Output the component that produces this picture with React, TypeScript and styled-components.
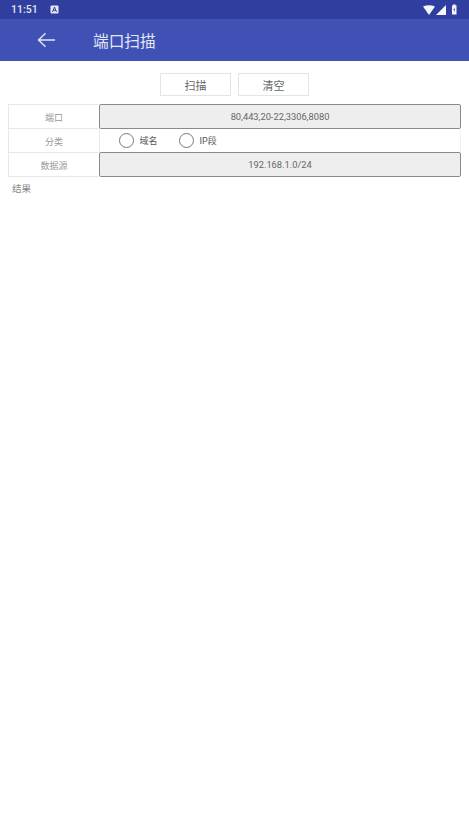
import styled, { createGlobalStyle } from "styled-components";

const GlobalStyle = createGlobalStyle`
  html, body {
    margin: 0;
    padding: 0;
    background: white;
  }
  body {
    font-family: "Roboto", "Noto Sans CJK SC", sans-serif;
  }
`;

const Screen = styled.div`
  width: 469px;
  height: 835px;
  background: white;
  overflow: hidden;
`;

const StatusBar = styled.div`
  height: 19px;
  background: #303f9f;
  color: #e4e7f4;
  display: flex;
  align-items: center;
  padding: 0 10px 0 11px;
  gap: 12px;
  font-size: 10.5px;
  font-weight: 500;
`;

const StatusRight = styled.div`
  margin-left: auto;
  display: flex;
  align-items: center;
  gap: 1px;
`;

const AppBar = styled.div`
  height: 42px;
  background: #3f51b5;
  color: #e4e7f4;
  display: flex;
  align-items: center;
  padding-left: 37px;
  gap: 38px;
  font-size: 15.7px;
`;

const Toolbar = styled.div`
  display: flex;
  justify-content: center;
  gap: 7px;
  padding-top: 12px;
  margin-bottom: 8px;
`;

const ActionButton = styled.button`
  width: 71px;
  height: 23px;
  padding: 0;
  background: white;
  border: 1px solid #e4e4e4;
  color: #666;
  font-size: 11px;
  font-family: inherit;
`;

const Form = styled.div`
  margin: 0 8px;
`;

const Row = styled.div`
  display: flex;
  height: 24px;
`;

const Label = styled.div`
  width: 90px;
  padding-top: 1px;
  border: 1px solid #e8e8e8;
  border-right: 0;
  margin-bottom: -1px;
  display: flex;
  align-items: center;
  justify-content: center;
  color: #999;
  font-size: 9px;
`;

const Field = styled.div`
  flex: 1;
  height: 25px;
  box-sizing: border-box;
  background: #eeeeee;
  border: 1px solid #8a8a8a;
  border-radius: 2px;
  display: flex;
  align-items: center;
  justify-content: center;
  color: #666;
  font-size: 9.3px;
`;

const Options = styled.div`
  flex: 1;
  display: flex;
  align-items: center;
  padding: 1px 0 0 18.5px;
  gap: 21px;
  border-left: 1px solid #e8e8e8;
  border-right: 1px solid #f0f0f0;
`;

const Option = styled.label`
  display: flex;
  align-items: center;
  gap: 6px;
  color: #555;
  font-size: 9px;
`;

const Radio = styled.span`
  flex: none;
  box-sizing: border-box;
  width: 15px;
  height: 15px;
  border: 1.4px solid #777;
  border-radius: 50%;
`;

const Result = styled.div`
  margin: 5px 0 0 12px;
  color: #888;
  font-size: 9.5px;
`;

export default function App() {
  return (
    <Screen>
      <GlobalStyle />
      <StatusBar>
        <span>11:51</span>
        <svg width="9" height="9" viewBox="0 0 9 9">
          <rect x="0.5" y="0.5" width="8" height="8" rx="1" fill="#e4e7f4" />
          <path d="M2.5 7 L4.5 2 L6.5 7 M3.3 5.3 H5.7" fill="none" stroke="#303f9f" strokeWidth="1" />
        </svg>
        <StatusRight>
          <svg width="13" height="10" viewBox="0 0 13 10">
            <path d="M1 1.5 Q7 -1 13 1.5 L7 10 Z" fill="#f5f6fb" />
          </svg>
          <svg width="10" height="10" viewBox="0 0 10 10">
            <path d="M10 0 V10 H0 Z" fill="#f5f6fb" />
          </svg>
          <svg width="12" height="11" viewBox="0 0 12 11">
            <path d="M5 1.5 H6 V0.5 H8.5 V1.5 H9.5 V10.5 H5 Z" fill="#f5f6fb" />
            <path d="M7.6 3 L6.3 6 H7.2 L6.8 8.5 L8.2 5.2 H7.3 Z" fill="#303f9f" />
          </svg>
        </StatusRight>
      </StatusBar>
      <AppBar>
        <svg width="18" height="16" viewBox="0 0 18 16">
          <path d="M18 8 H2 M8.5 1.2 L1.5 8 L8.5 14.8" fill="none" stroke="#e4e7f4" strokeWidth="1.4" />
        </svg>
        <span>端口扫描</span>
      </AppBar>
      <Toolbar>
        <ActionButton>扫描</ActionButton>
        <ActionButton>清空</ActionButton>
      </Toolbar>
      <Form>
        <Row>
          <Label>端口</Label>
          <Field>80,443,20-22,3306,8080</Field>
        </Row>
        <Row>
          <Label>分类</Label>
          <Options>
            <Option>
              <Radio />
              域名
            </Option>
            <Option>
              <Radio />
              IP段
            </Option>
          </Options>
        </Row>
        <Row>
          <Label>数据源</Label>
          <Field>192.168.1.0/24</Field>
        </Row>
      </Form>
      <Result>结果</Result>
    </Screen>
  );
}
